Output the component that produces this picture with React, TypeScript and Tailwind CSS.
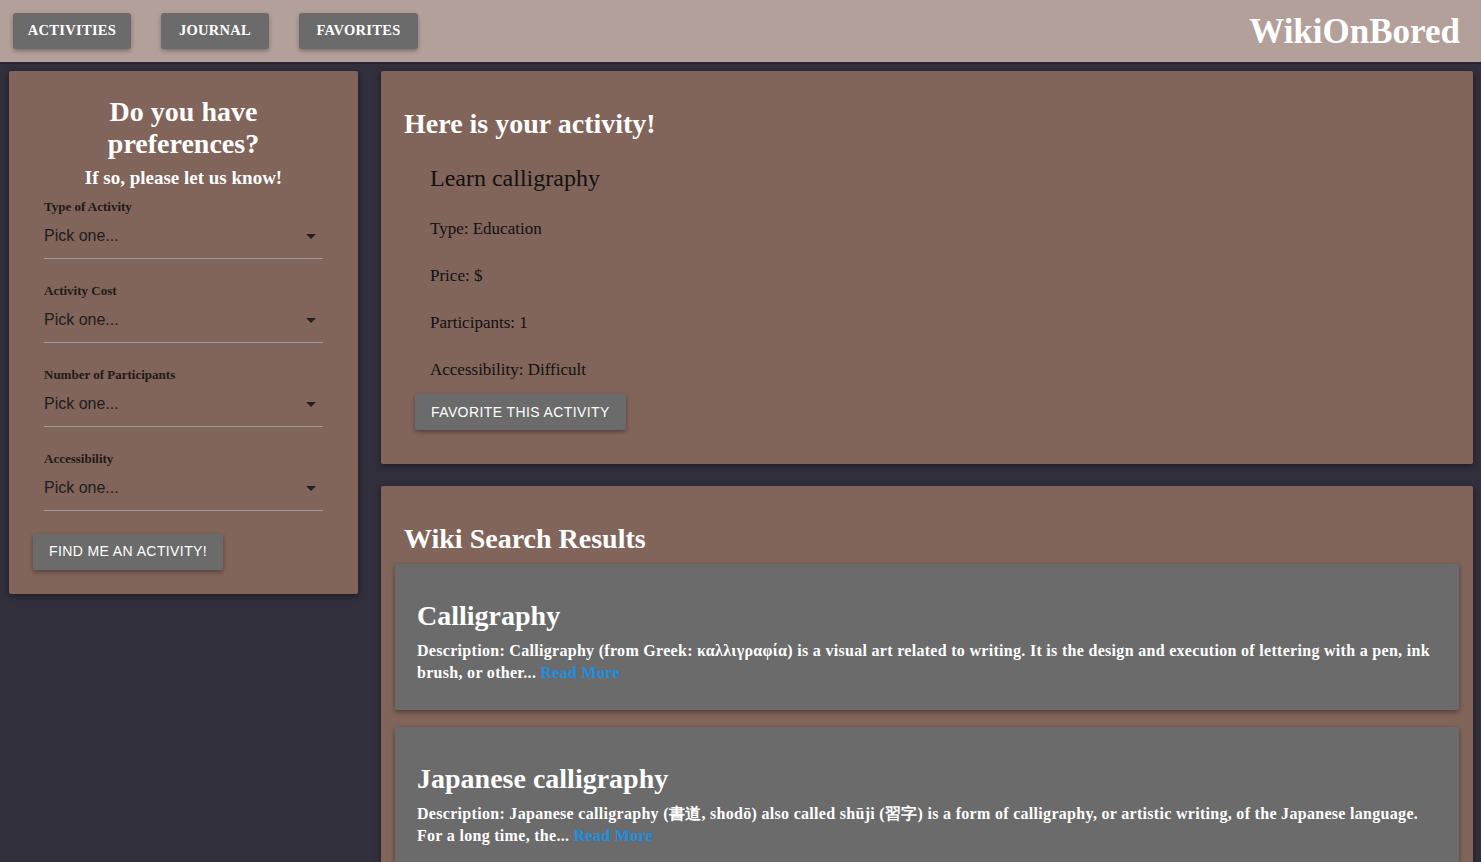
import { type FC } from 'react';

const serif = "font-['Liberation_Serif','DejaVu_Serif',serif]";
const sans = "font-['Liberation_Sans',Arial,sans-serif]";

const NAV = [
  { label: 'ACTIVITIES', w: 'w-[118px]' },
  { label: 'JOURNAL', w: 'w-[108px]' },
  { label: 'FAVORITES', w: 'w-[119px]' },
];

const FIELDS = ['Type of Activity', 'Activity Cost', 'Number of Participants', 'Accessibility'];

const DETAILS = ['Type: Education', 'Price: $', 'Participants: 1', 'Accessibility: Difficult'];

const RESULTS = [
  {
    title: 'Calligraphy',
    text: 'Description: Calligraphy (from Greek: καλλιγραφία) is a visual art related to writing. It is the design and execution of lettering with a pen, ink brush, or other...',
  },
  {
    title: 'Japanese calligraphy',
    text: 'Description: Japanese calligraphy (書道, shodō) also called shūji (習字) is a form of calligraphy, or artistic writing, of the Japanese language. For a long time, the...',
  },
];

const Caret: FC = () => (
  <svg width="10" height="5" viewBox="0 0 10 5" className="mr-[7px]">
    <path d="M0 0 L10 0 L5 5 Z" fill="#222" />
  </svg>
);

const App: FC = () => {
  return (
    <div className={`min-h-[862px] w-full bg-[#322f3c] ${serif}`}>
      <header className="flex h-[64px] items-center justify-between border-b-[2px] border-[#2a2733] bg-[#b3a09a] pl-[13px] pr-[21px]">
        <nav className="flex gap-[30px]">
          {NAV.map((item) => (
            <button
              key={item.label}
              type="button"
              className={`${item.w} h-[36px] rounded-[3px] bg-[#6b6b6b] text-[14.5px] font-bold tracking-[0.3px] text-white shadow-[0_2px_4px_rgba(0,0,0,0.3)]`}
            >
              {item.label}
            </button>
          ))}
        </nav>
        <div className="pt-[2px] text-[35px] font-bold text-white">WikiOnBored</div>
      </header>

      <main className="flex items-start gap-[23px] pl-[9px] pr-[8px] pt-[7px]">
        <aside className="w-[349px] shrink-0 rounded-[2px] bg-[#81645a] pb-[24px] pt-[25px] shadow-[0_2px_6px_rgba(0,0,0,0.45)]">
          <h2 className="px-[40px] text-center text-[28px] font-bold leading-[32px] text-white">
            Do you have preferences?
          </h2>
          <p className="mt-[4px] text-center text-[19px] font-bold text-white">If so, please let us know!</p>
          <div className="mt-[5px] flex flex-col gap-[23px] px-[35px]">
            {FIELDS.map((label) => (
              <div key={label}>
                <div className="text-[13px] font-bold leading-[18px] text-[#1e1a18]">{label}</div>
                <div className="flex h-[43px] items-center justify-between border-b border-[#9a9a9a]">
                  <span className={`${sans} pb-[2px] text-[16px] text-[#1d1d1d]`}>Pick one...</span>
                  <Caret />
                </div>
              </div>
            ))}
          </div>
          <button
            type="button"
            className={`${sans} ml-[24px] mt-[23px] h-[36px] rounded-[2px] bg-[#6b6b6b] px-[16px] text-[14px] tracking-[0.4px] text-white shadow-[0_2px_4px_rgba(0,0,0,0.35)]`}
          >
            FIND ME AN ACTIVITY!
          </button>
        </aside>

        <section className="flex min-w-0 flex-1 flex-col gap-[22px]">
          <div className="rounded-[2px] bg-[#81645a] pb-[34px] pl-[23px] pt-[37px] shadow-[0_2px_6px_rgba(0,0,0,0.45)]">
            <h2 className="text-[28px] font-bold leading-[32px] text-white">Here is your activity!</h2>
            <div className="pl-[26px]">
              <h3 className="mt-[24px] text-[24px] leading-[28px] text-[#111]">Learn calligraphy</h3>
              <div className="mt-[13px] flex flex-col">
                {DETAILS.map((d) => (
                  <p key={d} className="py-[14px] text-[17px] leading-[19px] text-[#111]">
                    {d}
                  </p>
                ))}
              </div>
            </div>
            <button
              type="button"
              className={`${sans} ml-[11px] mt-[1px] h-[36px] rounded-[2px] bg-[#6b6b6b] px-[16px] text-[14px] tracking-[0.4px] text-white shadow-[0_2px_4px_rgba(0,0,0,0.35)]`}
            >
              FAVORITE THIS ACTIVITY
            </button>
          </div>

          <div className="rounded-[2px] bg-[#81645a] px-[14px] pb-[20px] pt-[37px] shadow-[0_2px_6px_rgba(0,0,0,0.45)]">
            <h2 className="pl-[9px] text-[28px] font-bold leading-[32px] text-white">Wiki Search Results</h2>
            <div className="mt-[9px] flex flex-col gap-[17px]">
              {RESULTS.map((r) => (
                <article
                  key={r.title}
                  className="rounded-[2px] bg-[#6b6b6b] px-[22px] pb-[26px] pt-[36px] shadow-[0_2px_5px_rgba(0,0,0,0.4)]"
                >
                  <h3 className="text-[28px] font-bold leading-[32px] text-white">{r.title}</h3>
                  <p className="mt-[8px] text-[16px] font-bold leading-[22px] tracking-[0.3px] text-white">
                    {r.text} <a className="text-[#1b8fe2]" href="#">Read More</a>
                  </p>
                </article>
              ))}
            </div>
          </div>
        </section>
      </main>
    </div>
  );
};

export default App;
